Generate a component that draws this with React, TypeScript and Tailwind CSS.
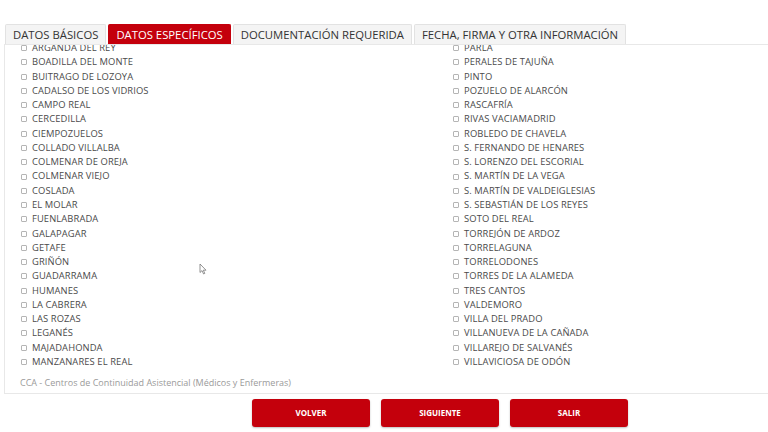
import React from "react";

const left = [
  "ARGANDA DEL REY",
  "BOADILLA DEL MONTE",
  "BUITRAGO DE LOZOYA",
  "CADALSO DE LOS VIDRIOS",
  "CAMPO REAL",
  "CERCEDILLA",
  "CIEMPOZUELOS",
  "COLLADO VILLALBA",
  "COLMENAR DE OREJA",
  "COLMENAR VIEJO",
  "COSLADA",
  "EL MOLAR",
  "FUENLABRADA",
  "GALAPAGAR",
  "GETAFE",
  "GRIÑÓN",
  "GUADARRAMA",
  "HUMANES",
  "LA CABRERA",
  "LAS ROZAS",
  "LEGANÉS",
  "MAJADAHONDA",
  "MANZANARES EL REAL",
];

const right = [
  "PARLA",
  "PERALES DE TAJUÑA",
  "PINTO",
  "POZUELO DE ALARCÓN",
  "RASCAFRÍA",
  "RIVAS VACIAMADRID",
  "ROBLEDO DE CHAVELA",
  "S. FERNANDO DE HENARES",
  "S. LORENZO DEL ESCORIAL",
  "S. MARTÍN DE LA VEGA",
  "S. MARTÍN DE VALDEIGLESIAS",
  "S. SEBASTIÁN DE LOS REYES",
  "SOTO DEL REAL",
  "TORREJÓN DE ARDOZ",
  "TORRELAGUNA",
  "TORRELODONES",
  "TORRES DE LA ALAMEDA",
  "TRES CANTOS",
  "VALDEMORO",
  "VILLA DEL PRADO",
  "VILLANUEVA DE LA CAÑADA",
  "VILLAREJO DE SALVANÉS",
  "VILLAVICIOSA DE ODÓN",
];

const tabs = [
  { label: "DATOS BÁSICOS", active: false },
  { label: "DATOS ESPECÍFICOS", active: true },
  { label: "DOCUMENTACIÓN REQUERIDA", active: false },
  { label: "FECHA, FIRMA Y OTRA INFORMACIÓN", active: false },
];

function Item({ name }: { name: string }) {
  return (
    <label className="flex items-center h-[14.27px] gap-[5px]">
      <span className="w-[6px] h-[6px] border border-[#b5b5b5] rounded-[1px] bg-white flex-shrink-0" />
      <span className="text-[9.4px] text-[#4a4a4a] tracking-[0.1px] whitespace-nowrap">{name}</span>
    </label>
  );
}

export default function App() {
  return (
    <div className="relative w-[768px] h-[432px] bg-white overflow-hidden" style={{ fontFamily: '"Open Sans", "Noto Sans", sans-serif' }}>
      {/* tabs */}
      <div className="flex items-end gap-[2px] pl-[5px] pt-[24px] h-[44px]">
        {tabs.map((t) => (
          <div
            key={t.label}
            className={`h-[20px] px-[7px] flex items-center text-[11.3px] leading-none border border-b-0 rounded-t-[2px] whitespace-nowrap ${
              t.active ? "bg-[#c4000c] border-[#c4000c] text-white" : "bg-[#f4f4f4] border-[#e2e2e2] text-[#333]"
            }`}
          >
            {t.label}
          </div>
        ))}
      </div>

      {/* content panel */}
      <div className="ml-[4px] h-[350px] border-t border-l border-b border-[#e8e8e8] overflow-hidden">
        <div className="-mt-[4px] pl-[16px] grid grid-cols-[432px_1fr]">
          <div className="flex flex-col">
            {left.map((n) => (
              <Item key={n} name={n} />
            ))}
          </div>
          <div className="flex flex-col">
            {right.map((n) => (
              <Item key={n} name={n} />
            ))}
          </div>
        </div>
        <div className="pl-[15px] mt-[7px] text-[9px] text-[#9a9a9a]">
          CCA - Centros de Continuidad Asistencial (Médicos y Enfermeras)
        </div>
      </div>

      {/* buttons */}
      <div className="flex justify-center gap-[11px] pt-[5px] pl-[112px]">
        {["VOLVER", "SIGUIENTE", "SALIR"].map((b) => (
          <button
            key={b}
            className="w-[118px] h-[28px] rounded-[3px] bg-[#c4000c] text-white text-[8px] font-bold shadow-[0_1px_2px_rgba(0,0,0,0.25)]"
          >
            {b}
          </button>
        ))}
      </div>

      {/* mouse cursor */}
      <svg className="absolute left-[199px] top-[263px]" width="8" height="12" viewBox="0 0 8 12">
        <path d="M1 1 L1 9.5 L3 7.6 L4.6 11 L5.8 10.4 L4.3 7.2 L7 7.2 Z" fill="#fff" stroke="#777" strokeWidth="0.8" />
      </svg>
    </div>
  );
}
